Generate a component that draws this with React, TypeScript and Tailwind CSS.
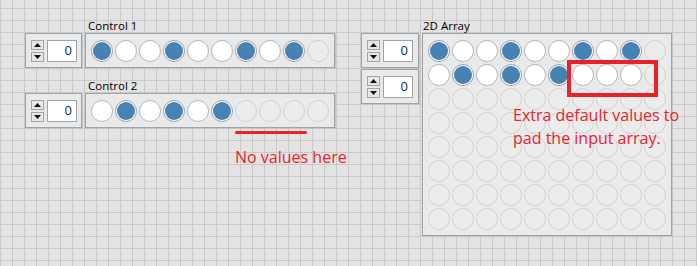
type Cell = "on" | "off" | "pad";

const row = (s: string): Cell[] =>
  s.split("").map((c) => (c === "1" ? "on" : c === "0" ? "off" : "pad"));

const control1 = row("100100101-");
const control2 = row("010101----");
const array2d = [
  row("100100101-"),
  row("010101000-"),
  ...Array.from({ length: 6 }, () => row("----------")),
];

function Led({ v }: { v: Cell }) {
  if (v === "pad") {
    return (
      <div className="w-[24px] h-[24px] flex items-center justify-center bg-[#ebebeb]">
        <div className="w-[22px] h-[22px] rounded-full border border-[#d2d2d2] bg-[#ececec]" />
      </div>
    );
  }
  if (v === "on") {
    return (
      <div className="w-[24px] h-[24px] flex items-center justify-center">
        <div className="w-[22px] h-[22px] rounded-full border border-[#9ea4aa] bg-white p-[1px]">
          <div className="w-full h-full rounded-full bg-[#4682b4]" />
        </div>
      </div>
    );
  }
  return (
    <div className="w-[24px] h-[24px] flex items-center justify-center">
      <div className="w-[22px] h-[22px] rounded-full border border-[#b8b8b8] bg-white" />
    </div>
  );
}

function Arrow({ up }: { up?: boolean }) {
  return (
    <div className="w-[13px] h-[10px] flex items-center justify-center bg-[#e6e6e6] border border-[#a4a4a4]">
      <svg width="7" height="4" viewBox="0 0 7 4">
        <path d={up ? "M0 4 L3.5 0 L7 4 Z" : "M0 0 L3.5 4 L7 0 Z"} fill="#111" />
      </svg>
    </div>
  );
}

function IndexBox() {
  return (
    <div className="w-[58px] h-[35px] flex gap-[3px] pl-[5px] pt-[6px] border border-[#a3a3a3] bg-[#e7e9eb] shadow-[1px_1px_0_#c4c4c4]">
      <div className="flex flex-col gap-[2px]">
        <Arrow up />
        <Arrow />
      </div>
      <div className="w-[30px] h-[22px] bg-white border border-[#a3a3a3] flex items-center justify-end pr-[4px] text-[13px] text-[#0f2a66] font-['Open_Sans',sans-serif]">
        0
      </div>
    </div>
  );
}

function LedRow({ cells }: { cells: Cell[] }) {
  return (
    <div className="flex">
      {cells.map((c, i) => (
        <Led key={i} v={c} />
      ))}
    </div>
  );
}

function Label({ text, className = "" }: { text: string; className?: string }) {
  return (
    <div className={`h-[15px] leading-[15px] text-[11.5px] text-black ${className}`}>{text}</div>
  );
}

export default function App() {
  return (
    <div className="w-[697px] h-[266px] overflow-hidden flex bg-[#e3e3e3] bg-[linear-gradient(#c9c9c9_1px,transparent_1px),linear-gradient(90deg,#c9c9c9_1px,transparent_1px)] bg-[size:12px_12px] bg-[position:0px_8px] font-['Open_Sans',sans-serif]">
      {/* 1D arrays */}
      <div className="ml-[25px] mt-[18px] flex flex-col w-[310px] shrink-0">
        <Label text="Control 1" className="ml-[63px]" />
        <div className="flex gap-[3px]">
          <IndexBox />
          <div className="border border-[#a3a3a3] bg-[#e7e9eb] px-[4px] pt-[5px] pb-[4px] shadow-[1px_1px_0_#c4c4c4]">
            <LedRow cells={control1} />
          </div>
        </div>

        <Label text="Control 2" className="ml-[63px] mt-[10px]" />
        <div className="flex gap-[3px]">
          <IndexBox />
          <div className="border border-[#a3a3a3] bg-[#e7e9eb] px-[4px] pt-[5px] pb-[4px] shadow-[1px_1px_0_#c4c4c4]">
            <LedRow cells={control2} />
          </div>
        </div>

        <div className="ml-[210px] mt-[3px] w-[72px] h-[3px] rounded-full bg-[#e8212a]" />
        <div className="ml-[210px] mt-[12px] text-[16px] leading-[22px] text-[#e5262d] whitespace-nowrap">
          No values here
        </div>
      </div>

      {/* 2D array */}
      <div className="ml-[26px] mt-[18px] flex flex-col shrink-0">
        <Label text="2D Array" className="ml-[62px]" />
        <div className="flex gap-[3px] items-start">
          <div className="flex flex-col gap-[1px]">
            <IndexBox />
            <IndexBox />
          </div>
          <div className="relative border border-[#a3a3a3] bg-[#e7e9eb] px-[4px] pt-[5px] pb-[4px] shadow-[1px_1px_0_#c4c4c4]">
            {array2d.map((r, i) => (
              <LedRow key={i} cells={r} />
            ))}
            <div className="absolute left-[144px] top-[26px] w-[91px] h-[37px] border-[4px] border-[#e8212a]" />
            <div className="absolute left-[90px] top-[70px] text-[16px] leading-[23px] text-[#e5262d] whitespace-nowrap">
              Extra default values to
              <br />
              pad the input array.
            </div>
          </div>
        </div>
      </div>
    </div>
  );
}
